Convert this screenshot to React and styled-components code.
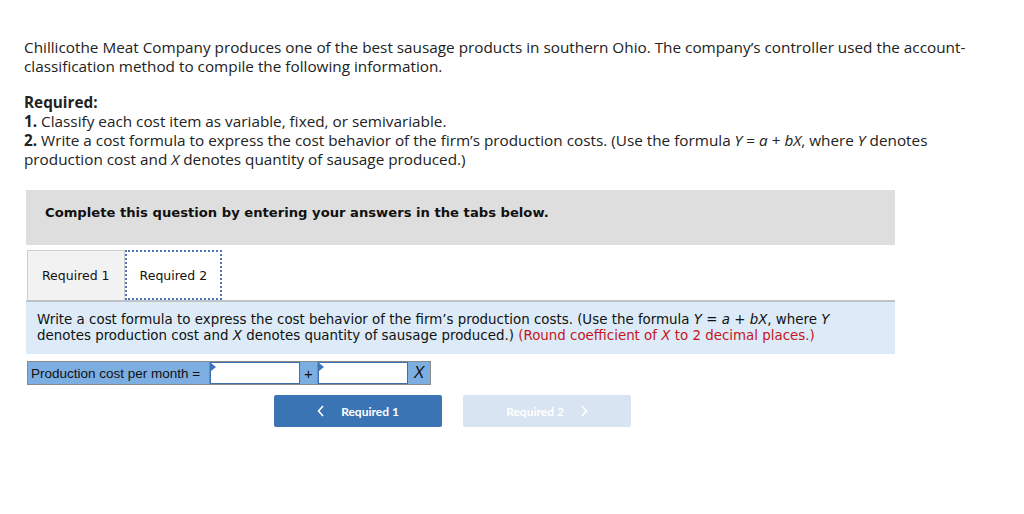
import React from "react";
import styled, { createGlobalStyle } from "styled-components";

const Global = createGlobalStyle`
  html, body { margin: 0; padding: 0; background: #fff; }
  body { width: 1024px; height: 514px; overflow: hidden; }
`;

const Page = styled.div`
  padding: 38px 0 0 24px;
  font-family: "Open Sans", Lato, sans-serif;
  color: #222;
`;

const Intro = styled.div`
  width: 990px;
  font-size: 15.3px;
  line-height: 19px;
  white-space: nowrap;
`;

const Para = styled.p`
  margin: 0 0 17px 0;
`;

const Strong = styled.b`
  font-weight: 700;
`;

const Box = styled.div`
  margin-left: 2px;
  width: 869px;
  font-family: Verdana, "DejaVu Sans", sans-serif;
`;

const Banner = styled.div`
  margin-top: 21px;
  background: #dedede;
  height: 55px;
  padding: 14px 0 0 19px;
  box-sizing: border-box;
  font-size: 13.15px;
  line-height: 18px;
  font-weight: 700;
  color: #111;
`;

const Tabs = styled.div`
  margin-top: 5px;
  display: flex;
  padding-left: 1px;
  height: 50px;
`;

const Tab = styled.div`
  box-sizing: border-box;
  height: 50px;
  display: flex;
  align-items: center;
  padding: 0 ${(p) => (p.$active ? 13 : 14)}px;
  font-size: 12.5px;
  color: #111;
  background: ${(p) => (p.$active ? "#fff" : "#f2f2f2")};
  border: ${(p) => (p.$active ? "2px dotted #4a78b8" : "1px solid #cfcfcf")};
  border-bottom: ${(p) => (p.$active ? "2px dotted #4a78b8" : "none")};
  margin-left: ${(p) => (p.$active ? 0 : 0)}px;
`;

const Panel = styled.div`
  background: #dcebf7;
  border-top: 2px solid #bfc3c7;
  padding: 10px 11px 10px 11px;
  font-size: 13.4px;
  line-height: 16px;
  color: #111;
  white-space: nowrap;
`;

const Red = styled.span`
  color: #c4161c;
`;

const FormRow = styled.div`
  margin-top: 7px;
  margin-left: 1px;
  display: flex;
  height: 24px;
  font-family: "Liberation Sans", Arial, sans-serif;
  font-size: 13.5px;
  color: #111;
`;

const Cell = styled.div`
  box-sizing: border-box;
  height: 24px;
  background: #7daee2;
  border: 1px solid #8a8a8a;
  border-left: ${(p) => (p.$first ? "1px solid #8a8a8a" : "none")};
  display: flex;
  align-items: center;
  justify-content: ${(p) => (p.$center ? "center" : "flex-start")};
  padding: 0 ${(p) => (p.$center ? 0 : 3)}px;
  width: ${(p) => p.$w}px;
  font-style: ${(p) => (p.$italic ? "italic" : "normal")};
  font-size: ${(p) => p.$size || 13.5}px;
`;

const InputWrap = styled.div`
  position: relative;
  box-sizing: border-box;
  width: 90px;
  height: 24px;
  background: #7daee2;
  border-top: 1px solid #8a8a8a;
  border-bottom: 1px solid #8a8a8a;
`;

const Input = styled.input`
  box-sizing: border-box;
  width: 90px;
  height: 22px;
  border: 1px solid #3e6fae;
  background: #fff;
  outline: none;
  margin: 0;
  padding: 0 4px;
  display: block;
`;

const Flag = styled.span`
  position: absolute;
  left: 1px;
  top: 1px;
  width: 0;
  height: 0;
  border-top: 4px solid transparent;
  border-bottom: 4px solid transparent;
  border-left: 5px solid #3a74c4;
`;

const Buttons = styled.div`
  margin-top: 10px;
  padding-left: 248px;
  display: flex;
  gap: 21px;
  font-family: Lato, "Open Sans", sans-serif;
`;

const NavButton = styled.div`
  box-sizing: border-box;
  width: 168px;
  height: 32px;
  border-radius: 2px;
  background: ${(p) => (p.$disabled ? "#d8e4f1" : "#3b74b5")};
  color: #fff;
  font-size: 12px;
  font-weight: 700;
  display: flex;
  align-items: center;
  justify-content: center;
  gap: 16px;
`;

const Chevron = ({ dir }) => (
  <svg width="8" height="12" viewBox="0 0 8 12">
    <path
      d={dir === "left" ? "M6 1 L1.5 6 L6 11" : "M2 1 L6.5 6 L2 11"}
      fill="none"
      stroke="#fff"
      strokeWidth="1.6"
    />
  </svg>
);

export default function App() {
  return (
    <>
      <Global />
      <Page>
        <Intro>
          <Para>
            Chillicothe Meat Company produces one of the best sausage products in southern Ohio. The
            company’s controller used the account-
            <br />
            classification method to compile the following information.
          </Para>
          <div>
            <Strong>Required:</Strong>
            <br />
            <Strong>1.</Strong> Classify each cost item as variable, fixed, or semivariable.
            <br />
            <Strong>2.</Strong> Write a cost formula to express the cost behavior of the firm’s
            production costs. (Use the formula <i>Y</i> = <i>a</i> + <i>bX</i>, where <i>Y</i>{" "}
            denotes
            <br />
            production cost and <i>X</i> denotes quantity of sausage produced.)
          </div>
        </Intro>
        <Box>
          <Banner>Complete this question by entering your answers in the tabs below.</Banner>
          <Tabs>
            <Tab>Required 1</Tab>
            <Tab $active>Required 2</Tab>
          </Tabs>
          <Panel>
            Write a cost formula to express the cost behavior of the firm’s production costs. (Use
            the formula <i>Y</i> = <i>a</i> + <i>bX</i>, where <i>Y</i>
            <br />
            denotes production cost and <i>X</i> denotes quantity of sausage produced.){" "}
            <Red>
              (Round coefficient of <i>X</i> to 2 decimal places.)
            </Red>
          </Panel>
          <FormRow>
            <Cell $first $w={183}>Production cost per month =</Cell>
            <InputWrap>
              <Input />
              <Flag />
            </InputWrap>
            <Cell $center $size={15} $w={18}>+</Cell>
            <InputWrap>
              <Input />
              <Flag />
            </InputWrap>
            <Cell $center $italic $size={16} $w={23}>X</Cell>
          </FormRow>
          <Buttons>
            <NavButton>
              <Chevron dir="left" />
              Required 1
            </NavButton>
            <NavButton $disabled>
              Required 2
              <Chevron dir="right" />
            </NavButton>
          </Buttons>
        </Box>
      </Page>
    </>
  );
}
